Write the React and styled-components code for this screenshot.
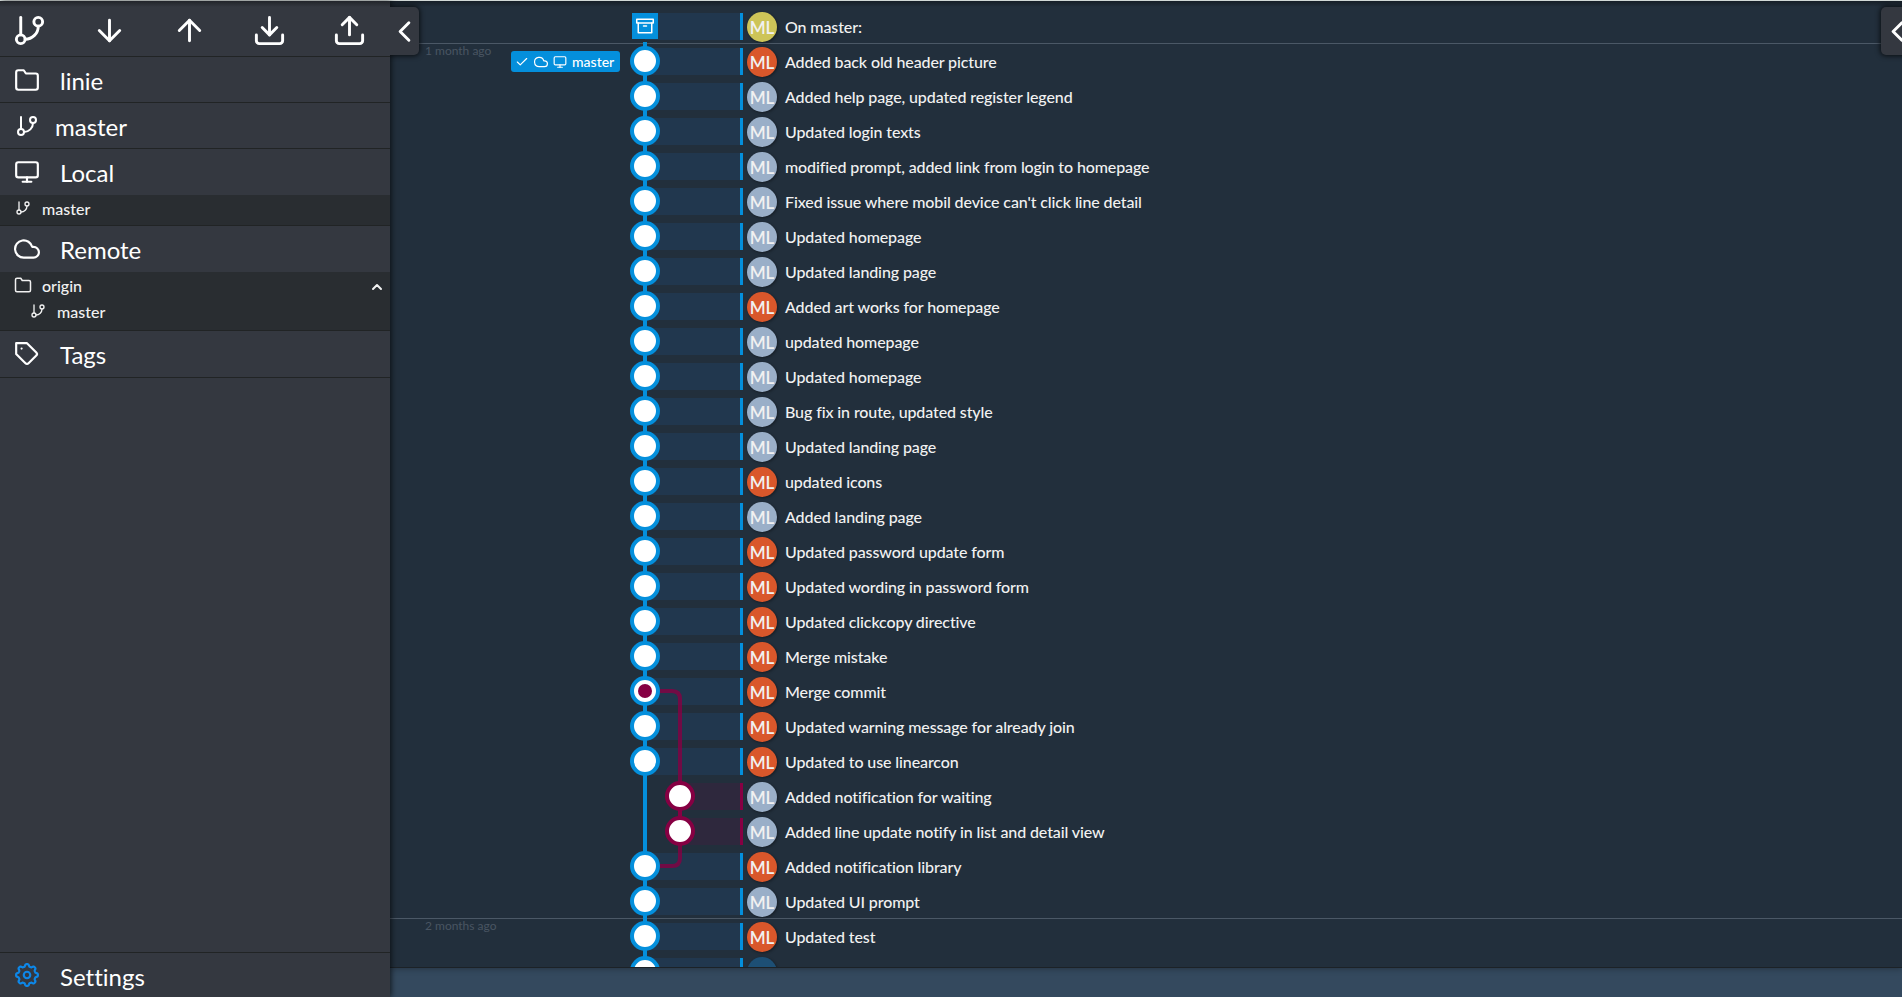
import React from 'react';
import styled, { createGlobalStyle } from 'styled-components';
import { FiGitBranch, FiArrowDown, FiArrowUp, FiDownload, FiUpload, FiFolder, FiMonitor, FiCloud, FiTag, FiChevronLeft, FiChevronUp, FiArchive, FiCheck } from 'react-icons/fi';

const Global = createGlobalStyle`
  * { box-sizing: border-box; }
  body {
    margin: 0;
    background: #34495e;
    font-family: Lato, sans-serif;
    font-variant-ligatures: none;
    color: #fff;
    overflow: hidden;
  }
`;

const BLUE = '#048fdc';
const PLUM = '#860043';
const ROW = 35;

const Page = styled.div`
  display: flex;
  height: 997px;
  width: 1902px;
  border-top: 1px solid #e8f0ee;
  position: relative;
`;

const Sidebar = styled.aside`
  width: 390px;
  flex: none;
  display: flex;
  flex-direction: column;
  background: #343840;
  box-shadow: 1px 0 6px rgba(0, 0, 0, 0.7);
  position: relative;
  z-index: 2;
`;

const Toolbar = styled.div`
  height: 56px;
  padding: 4px 23px 0 12px;
  display: flex;
  align-items: center;
  justify-content: space-between;
  border-bottom: 1px solid #212425;
  svg { width: 35px; height: 35px; }
`;

const Section = styled.div`
  height: ${(p) => p.$height || 46}px;
  padding: 0 0 0 ${(p) => (p.$small ? 15 : 14)}px;
  display: flex;
  align-items: center;
  gap: ${(p) => (p.$small ? 16 : 20)}px;
  font-size: 24px;
  border-bottom: 1px solid ${(p) => (p.$open ? 'transparent' : '#212425')};
  > svg {
    width: ${(p) => (p.$small ? 24 : 26)}px;
    height: ${(p) => (p.$small ? 24 : 26)}px;
    flex: none;
  }
  > span { position: relative; top: ${(p) => (p.$height === 47 ? 0 : 1)}px; }
`;

const SubList = styled.div`
  background: #292d31;
  height: ${(p) => p.$height}px;
  border-bottom: 1px solid #212425;
`;

const SubItem = styled.div`
  height: 26px;
  display: flex;
  align-items: center;
  padding: 0 5px 0 ${(p) => p.$indent}px;
  gap: ${(p) => (p.$folder ? 10 : 11)}px;
  font-size: 16px;
  font-weight: 500;
  color: #f1f1f1;
  > svg {
    width: ${(p) => (p.$folder ? 18 : 16)}px;
    height: ${(p) => (p.$folder ? 18 : 16)}px;
    flex: none;
  }
  > svg:last-child { width: 16px; height: 16px; margin-top: 4px; stroke-width: 3; }
  > span { flex: 1; }
`;

const Footer = styled(Section)`
  margin-top: auto;
  border-top: 1px solid #212425;
  border-bottom: none;
  > svg { color: #0d87e8; }
`;

const Main = styled.main`
  flex: 1;
  height: 967px;
  background: #222f3c;
  border-bottom: 1px solid #1c2227;
  box-shadow: 0 1px 6px rgba(0, 0, 0, 0.3);
  overflow: hidden;
  position: relative;
`;

const PanelTab = styled.button`
  position: absolute;
  z-index: 3;
  top: 6px;
  left: ${(p) => (p.$right ? 1881 : 390)}px;
  width: 29px;
  height: 48px;
  padding: 0 0 0 ${(p) => (p.$right ? 4 : 0)}px;
  border: 0;
  color: #fff;
  background: #343840;
  border-radius: ${(p) => (p.$right ? '5px 0 0 5px' : '0 5px 5px 0')};
  box-shadow: 0 0 5px 1px rgba(0, 0, 0, 0.7);
  clip-path: ${(p) => (p.$right ? 'none' : 'inset(-8px -8px -8px 0)')};
  display: flex;
  align-items: center;
  justify-content: center;
  svg { width: 35px; height: 35px; flex: none; }
`;

const Shade = styled.div`
  position: absolute;
  z-index: 4;
  inset: 0 0 auto 0;
  height: 6px;
  background: linear-gradient(rgba(0, 0, 0, 0.35), transparent);
`;

const List = styled.div`
  padding-top: 7px;
`;

const Row = styled.div`
  height: ${ROW}px;
  display: grid;
  grid-template-columns: 255px 98px 4px 30px 8px 1fr;
  align-items: center;
  ${(p) => p.$divider && `
    background: linear-gradient(#4b5866, #4b5866) 0 0 / 100% 1px no-repeat;
  `}
`;

const Gutter = styled.div`
  height: 100%;
  display: flex;
  justify-content: space-between;
  align-items: flex-start;
  padding: 0 25px 0 35px;
`;

const Age = styled.span`
  font-size: 12px;
  line-height: 16px;
  color: #495562;
`;

const Branch = styled.div`
  margin-left: auto;
  margin-top: 8px;
  height: 21px;
  width: 109px;
  padding: 0 0 0 4px;
  border-radius: 3px;
  background: ${BLUE};
  display: flex;
  align-items: center;
  gap: 5px;
  font-size: 14px;
  font-weight: 500;
  svg { width: 14px; height: 14px; flex: none; }
`;

const Lane = styled.div`
  height: 27px;
  margin-top: 2px;
  margin-left: ${(p) => (p.$plum ? 35 : 0)}px;
  background: ${(p) => (p.$plum ? 'rgba(134,0,67,0.13)' : 'rgba(30,90,150,0.2)')};
  border-right: 3px solid ${(p) => (p.$plum ? PLUM : BLUE)};
`;

const Avatar = styled.div`
  grid-column: 4;
  width: 30px;
  height: 30px;
  margin-top: 3px;
  border-radius: 50%;
  background: ${(p) => p.$color};
  box-shadow: 1px 1px 3px rgba(0, 0, 0, 0.4);
  display: flex;
  align-items: center;
  justify-content: center;
  font-size: 17px;
  font-weight: 600;
  color: #f1f1f1;
`;

const Message = styled.div`
  grid-column: 6;
  padding-top: 2px;
  font-size: 16px;
  font-weight: 500;
  letter-spacing: -0.11px;
  color: #f1f1f1;
  white-space: nowrap;
`;

const Graph = styled.svg`
  position: absolute;
  left: 235px;
  top: 0;
  pointer-events: none;
`;

const StashMark = styled.div`
  position: absolute;
  left: 242px;
  top: 12px;
  width: 26px;
  height: 26px;
  background: ${BLUE};
  display: flex;
  align-items: center;
  justify-content: center;
  svg { width: 18px; height: 18px; }
`;

const COLORS = { y: '#cdc458', o: '#d9572b', g: '#9aafc8', d: '#1d4f75' };

const commits = [
  ['y', 'On master:'],
  ['o', 'Added back old header picture'],
  ['g', 'Added help page, updated register legend'],
  ['g', 'Updated login texts'],
  ['g', 'modified prompt, added link from login to homepage'],
  ['g', "Fixed issue where mobil device can't click line detail"],
  ['g', 'Updated homepage'],
  ['g', 'Updated landing page'],
  ['o', 'Added art works for homepage'],
  ['g', 'updated homepage'],
  ['g', 'Updated homepage'],
  ['g', 'Bug fix in route, updated style'],
  ['g', 'Updated landing page'],
  ['o', 'updated icons'],
  ['g', 'Added landing page'],
  ['o', 'Updated password update form'],
  ['o', 'Updated wording in password form'],
  ['o', 'Updated clickcopy directive'],
  ['o', 'Merge mistake'],
  ['o', 'Merge commit'],
  ['o', 'Updated warning message for already join'],
  ['o', 'Updated to use linearcon'],
  ['g', 'Added notification for waiting'],
  ['g', 'Added line update notify in list and detail view'],
  ['o', 'Added notification library'],
  ['g', 'Updated UI prompt'],
  ['o', 'Updated test'],
  ['d', ''],
];

const ages = { 1: '1 month ago', 26: '2 months ago' };
const isSide = (i) => i === 22 || i === 23;
const nodeY = (i) => 25 + i * ROW;

const gearPath = (() => {
  const pts = [];
  for (let k = 0; k < 128; k++) {
    const a = (k / 128) * Math.PI * 2;
    const r = 9 + 1.1 * Math.tanh(2 * Math.cos(8 * a));
    pts.push(`${(12 + r * Math.cos(a)).toFixed(2)} ${(12 + r * Math.sin(a)).toFixed(2)}`);
  }
  return `M${pts.join('L')}Z`;
})();

const GearIcon = () => (
  <svg viewBox="0 0 24 24" fill="none" stroke="currentColor" strokeWidth="2" strokeLinejoin="round">
    <path d={gearPath} />
    <circle cx="12" cy="12" r="3" />
  </svg>
);

const CommitGraph = () => (
  <Graph width="80" height="966">
    <path d={`M20 ${nodeY(0) + 16}V966`} stroke={BLUE} strokeWidth="4" />
    <path d={`M20 ${nodeY(19)}H47Q55 ${nodeY(19)} 55 ${nodeY(19) + 8}V${nodeY(22)}M55 ${nodeY(23)}V${nodeY(24) - 8}Q55 ${nodeY(24)} 47 ${nodeY(24)}H20`} stroke={PLUM} strokeOpacity="0.8" strokeWidth="4" fill="none" />
    <path d={`M55 ${nodeY(22)}V${nodeY(23)}`} stroke={PLUM} strokeWidth="4" />
    {commits.map((_, i) => i > 0 && (
      <circle key={i} cx={isSide(i) ? 55 : 20} cy={nodeY(i)} r="13" fill="#fff" stroke={isSide(i) ? PLUM : BLUE} strokeWidth="4" />
    ))}
    <circle cx="20" cy={nodeY(19)} r="7" fill={PLUM} />
  </Graph>
);

export default function App() {
  return (
    <>
      <Global />
      <Page>
        <Sidebar>
          <Toolbar><FiGitBranch /><FiArrowDown /><FiArrowUp /><FiDownload /><FiUpload /></Toolbar>
          <Section><FiFolder /><span>linie</span></Section>
          <Section $small><FiGitBranch /><span>master</span></Section>
          <Section $open><FiMonitor /><span>Local</span></Section>
          <SubList $height={31}>
            <SubItem $indent={15}><FiGitBranch /><span>master</span></SubItem>
          </SubList>
          <Section $open><FiCloud /><span>Remote</span></Section>
          <SubList $height={59}>
            <SubItem $indent={14} $folder><FiFolder /><span>origin</span><FiChevronUp /></SubItem>
            <SubItem $indent={30}><FiGitBranch /><span>master</span></SubItem>
          </SubList>
          <Section $height={47}><FiTag /><span>Tags</span></Section>
          <Footer $height={45}><GearIcon /><span>Settings</span></Footer>
        </Sidebar>
        <Main>
          <List>
            {commits.map(([color, text], i) => (
              <Row key={i} $divider={i in ages}>
                <Gutter>
                  {ages[i] && <Age>{ages[i]}</Age>}
                  {i === 1 && <Branch><FiCheck /><FiCloud /><FiMonitor /><span>master</span></Branch>}
                </Gutter>
                <Lane $plum={isSide(i)} />
                <Avatar $color={COLORS[color]}>{text && <span>ML</span>}</Avatar>
                <Message>{text}</Message>
              </Row>
            ))}
          </List>
          <CommitGraph />
          <StashMark><FiArchive /></StashMark>
        </Main>
        <PanelTab><FiChevronLeft /></PanelTab>
        <PanelTab $right><FiChevronLeft /></PanelTab>
        <Shade />
      </Page>
    </>
  );
}
